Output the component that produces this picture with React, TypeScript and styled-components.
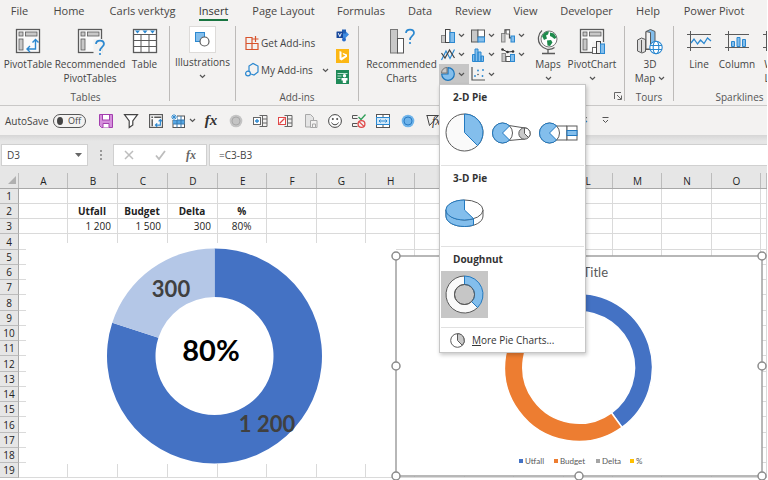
import React from 'react';
import styled, { createGlobalStyle } from 'styled-components';

const UI = '"Open Sans", "Noto Sans", sans-serif';
const CHART = 'Lato, "Open Sans", sans-serif';
const BLUE = '#2b88d0';
const LIGHT = '#83beec';
const INK = '#5a5a5a';
const GREY = '#c8c8c8';

const GlobalStyle = createGlobalStyle`
  *, *::before, *::after { box-sizing: border-box; }
  body { margin: 0; background: #fff; overflow: hidden; }
  button, input { font: inherit; color: inherit; }
  svg { display: block; flex: none; overflow: visible; }
`;

const Page = styled.div`
  display: flex;
  flex-direction: column;
  height: 100vh;
  overflow: hidden;
  border-right: 1px solid #fff;
  background: #e6e6e6;
  color: #444;
  font-family: ${UI};
  font-size: 10px;
  line-height: 14px;
`;

const PlainButton = styled.button`
  border: 0;
  padding: 0;
  margin: 0;
  background: transparent;
  cursor: pointer;
`;

/* ---------- ribbon ---------- */

const TabBar = styled.nav`
  display: flex;
  height: 22px;
  flex: none;
  background: #f3f2f1;
  font-size: 11px;
`;

const Tab = styled(PlainButton)<{ $width: number; $active?: boolean }>`
  flex: none;
  width: ${p => p.$width}px;
  display: flex;
  justify-content: center;
  align-items: flex-start;
  white-space: nowrap;
  color: ${p => (p.$active ? '#333' : '#484644')};
  span {
    padding-top: 3px;
    height: 21px;
    line-height: 15px;
    border-bottom: 2px solid ${p => (p.$active ? '#187541' : 'transparent')};
  }
`;

const Ribbon = styled.div`
  display: flex;
  flex: none;
  height: 84px;
  padding: 4px 0;
  background: #f3f2f1;
  border-bottom: 1px solid #c9c8c7;
`;

const Group = styled.section<{ $width: number; $pad?: number }>`
  flex: none;
  display: flex;
  flex-direction: column;
  width: ${p => p.$width}px;
  height: 75px;
  padding-left: ${p => p.$pad ?? 0}px;
  border-right: 1px solid #bdbbb9;
`;

const GroupBody = styled.div`
  flex: 1;
  display: flex;
  align-items: flex-start;
`;

const GroupLabel = styled.div`
  display: flex;
  justify-content: center;
  height: 12px;
  line-height: 14px;
  margin-bottom: -1px;
  color: #555;
`;

const LauncherRow = styled(GroupLabel)`
  justify-content: flex-end;
  align-items: center;
  padding-right: 2px;
`;

const BigButton = styled(PlainButton)<{ $width: number }>`
  width: ${p => p.$width}px;
  flex: none;
  display: flex;
  flex-direction: column;
  align-items: center;
  padding-top: 3px;
  white-space: nowrap;
  line-height: 14px;
  > svg { margin-bottom: 3px; }
`;

const BoxedButton = styled(BigButton)`
  padding-top: 0;
`;

const IconBox = styled.span`
  display: flex;
  align-items: center;
  justify-content: center;
  width: 27px;
  height: 27px;
  margin-bottom: 2px;
  background: #fff;
  border: 1px solid #dddbd9;
`;

const Caret = styled.span`
  display: flex;
  height: 14px;
  align-items: center;
  justify-content: center;
`;

const InlineLabel = styled.span`
  display: flex;
  align-items: center;
  gap: 3px;
`;

const AddinsBody = styled(GroupBody)`
  padding: 3px 9px 0 9px;
  justify-content: space-between;
`;

const AddinList = styled.div`
  display: flex;
  flex-direction: column;
  gap: 13px;
  padding-top: 7px;
`;

const AddinButton = styled(PlainButton)`
  display: flex;
  align-items: center;
  gap: 2px;
  height: 14px;
  white-space: nowrap;
`;

const AddinCaret = styled(Caret)`
  margin-left: 7px;
`;

const AddinIcons = styled.div`
  display: flex;
  flex-direction: column;
  gap: 7px;
`;

const ChartGrid = styled.div`
  flex: none;
  display: grid;
  grid-template-columns: repeat(3, 30px);
  grid-template-rows: repeat(2, 19px) 20px;
`;

const ChartButton = styled(PlainButton)<{ $open?: boolean }>`
  display: flex;
  align-items: center;
  gap: 3px;
  width: 30px;
  height: 100%;
  padding-left: 2px;
  background: ${p => (p.$open ? '#c6c6c6' : 'transparent')};
`;

const MenuAnchor = styled.div`
  position: relative;
`;

/* ---------- pie menu ---------- */

const Menu = styled.div`
  position: absolute;
  top: 100%;
  left: 0;
  z-index: 10;
  width: 147px;
  padding: 0 1px;
  background: #fff;
  border: 1px solid #c6c6c6;
  box-shadow: 1px 2px 4px rgba(0, 0, 0, 0.22);
  color: #333;
`;

const MenuSection = styled.div`
  height: 81px;
  border-bottom: 1px solid #e1e1e1;
`;

const MenuHeading = styled.div`
  padding: 4px 0 0 12px;
  height: 24px;
  font-size: 10px;
  font-weight: 700;
  line-height: 16px;
`;

const MenuRow = styled.div`
  display: flex;
`;

const MenuTile = styled(PlainButton)<{ $selected?: boolean }>`
  display: flex;
  align-items: center;
  justify-content: center;
  width: 47px;
  height: 47px;
  background: ${p => (p.$selected ? '#c6c6c6' : 'transparent')};
`;

const MoreItem = styled(PlainButton)`
  display: flex;
  align-items: center;
  gap: 7px;
  width: 100%;
  height: 24px;
  padding-left: 9px;
`;

/* ---------- quick access ---------- */

const QuickBar = styled.div`
  display: flex;
  flex: none;
  align-items: center;
  height: 29px;
  padding-left: 5px;
  background: #f3f2f1;
`;

const AutoSave = styled.label`
  display: flex;
  align-items: center;
  width: 88px;
  flex: none;
  justify-content: space-between;
  padding-right: 7px;
`;

const Switch = styled.span`
  display: flex;
  align-items: center;
  gap: 5px;
  width: 33px;
  height: 14px;
  padding: 0 4px 0 3px;
  border: 1px solid #555;
  border-radius: 7px;
  font-size: 9px;
  line-height: 12px;
`;

const SwitchInput = styled.input`
  appearance: none;
  width: 8px;
  height: 8px;
  margin: 0;
  border-radius: 50%;
  background: #444;
`;

const QuickButton = styled(PlainButton)<{ $width?: number }>`
  display: flex;
  flex: none;
  align-items: center;
  justify-content: center;
  gap: 4px;
  width: ${p => p.$width ?? 25}px;
  height: 20px;
`;

const QuickGap = styled.div`
  flex: none;
  width: 123px;
`;

/* ---------- formula bar ---------- */

const FormulaBar = styled.div`
  display: flex;
  flex: none;
  height: 31px;
  padding: 9px 0 0 1px;
  background: linear-gradient(#d6d6d6, #e6e6e6 6px);
`;

const NameBox = styled.div`
  display: flex;
  align-items: center;
  width: 87px;
  padding-right: 5px;
  background: #fff;
  border: 1px solid #d0d0d0;
`;

const FieldInput = styled.input<{ $pad?: number }>`
  flex: 1;
  min-width: 0;
  height: 19px;
  padding: 0 0 0 ${p => p.$pad ?? 5}px;
  border: 0;
  outline: 0;
  background: transparent;
`;

const FormulaDots = styled.div`
  display: flex;
  align-items: center;
  justify-content: center;
  width: 25px;
`;

const FormulaTools = styled.div`
  display: flex;
  align-items: center;
  width: 94px;
  background: #fff;
  border: 1px solid #d0d0d0;
`;

const ToolButton = styled(PlainButton)`
  display: flex;
  flex: 1;
  justify-content: center;
`;

const FormulaField = styled.div`
  display: flex;
  flex: 1;
  margin-left: 2px;
  background: #fff;
  border: 1px solid #d0d0d0;
  border-right: 0;
`;

/* ---------- sheet ---------- */

const Sheet = styled.div`
  position: relative;
  flex: 1;
  min-height: 0;
  overflow: hidden;
  background: #fff;
`;

const Grid = styled.table`
  width: 100%;
  table-layout: fixed;
  border-collapse: separate;
  border-spacing: 0;
  color: #222;
`;

const Col = styled.col<{ $width?: number }>`
  width: ${p => (p.$width ? `${p.$width}px` : 'auto')};
`;

const HeadCell = styled.th`
  height: 23px;
  padding: 8px 0 0;
  background: linear-gradient(#bcbcbc, #bcbcbc) right bottom / 1px 15px no-repeat #e6e6e6;
  border-bottom: 1px solid #a8a8a8;
  font-weight: 400;
  line-height: 14px;
  overflow: hidden;
`;

const Corner = styled(HeadCell)`
  svg { margin-left: 8px; margin-top: -2px; }
`;

const Row = styled.tr`
  height: 15px;
  &:nth-child(4n) { height: 16px; }
`;

const RowHead = styled.th`
  padding: 0;
  background: #e6e6e6;
  border-right: 1px solid #a8a8a8;
  border-bottom: 1px solid #bcbcbc;
  font-size: 10px;
  font-weight: 400;
  line-height: 14px;
`;

const Cell = styled.td<{ $bold?: boolean; $align?: string }>`
  padding: 0 6px 0 5px;
  border-right: 1px solid #dadada;
  border-bottom: 1px solid #dadada;
  font-weight: ${p => (p.$bold ? 700 : 400)};
  text-align: ${p => p.$align ?? 'left'};
  line-height: 14px;
  white-space: nowrap;
  overflow: hidden;
`;

const FloatingChart = styled.figure<{ $x: number; $y: number; $w: number; $h: number }>`
  position: absolute;
  left: ${p => p.$x}px;
  top: ${p => p.$y}px;
  width: ${p => p.$w}px;
  height: ${p => p.$h}px;
  margin: 0;
  background: #fff;
  font-family: ${CHART};
`;

/* ---------- geometry ---------- */

const pt = (cx: number, cy: number, r: number, deg: number) => {
  const a = ((deg - 90) * Math.PI) / 180;
  return `${(cx + r * Math.cos(a)).toFixed(2)} ${(cy + r * Math.sin(a)).toFixed(2)}`;
};

const slice = (cx: number, cy: number, r: number, from: number, to: number) =>
  `M${cx} ${cy}L${pt(cx, cy, r, from)}A${r} ${r} 0 ${to - from > 180 ? 1 : 0} 1 ${pt(cx, cy, r, to)}Z`;

const ring = (cx: number, cy: number, r: number, inner: number, from: number, to: number) => {
  const big = to - from > 180 ? 1 : 0;
  return `M${pt(cx, cy, r, from)}A${r} ${r} 0 ${big} 1 ${pt(cx, cy, r, to)}L${pt(cx, cy, inner, to)}A${inner} ${inner} 0 ${big} 0 ${pt(cx, cy, inner, from)}Z`;
};

/* ---------- icons ---------- */

const Chevron = () => (
  <svg width="7" height="5" viewBox="0 0 7 5" fill="none" stroke="#555" strokeWidth="1.2">
    <path d="M1 1l2.500 2.500L6 1" />
  </svg>
);

const PivotBase = () => (
  <g stroke={INK}>
    <rect x="0.5" y="0.5" width="23" height="23" fill="#fafafa" strokeWidth="1.3" />
    <g fill={GREY} strokeWidth="0.8">
      <rect x="3" y="3" width="4" height="4" />
      <rect x="9.5" y="3" width="11.5" height="4" />
      <rect x="3" y="10" width="4" height="11" />
    </g>
  </g>
);

const PivotIcon = () => (
  <svg width="24" height="25" viewBox="0 0 24 25">
    <PivotBase />
    <path d="M11 20h8.500v-9M14 17l-3 3 3 3M16.500 13.500l3-3 3 3" fill="none" stroke={BLUE} strokeWidth="1.4" />
  </svg>
);

const Question = ({ x, y }: { x: number; y: number }) => (
  <g transform={`translate(${x} ${y})`}>
    <path d="M1 4C1 -0.500 9 -0.500 9 4C9 7 5 7 5 11" fill="none" stroke={BLUE} strokeWidth="1.7" />
    <circle cx="5" cy="14" r="1.1" fill={BLUE} />
  </g>
);

const RecPivotIcon = () => (
  <svg width="24" height="25" viewBox="0 0 24 25">
    <PivotBase />
    <path d="M15.500 10h9v15h-9z" fill="#f3f2f1" />
    <Question x={17} y={11} />
  </svg>
);

const TableIcon = () => (
  <svg width="24" height="25" viewBox="0 0 24 25">
    <rect x="0.5" y="0.5" width="23" height="23" fill="#fff" stroke={INK} strokeWidth="1.3" />
    <path d="M0 5.500h24M0 11.500h24M0 17.500h24M8 5v19M16 5v19" stroke={INK} fill="none" />
    <path d="M2 1.500h5L4.500 4.500zM9.500 1.500h5L12 4.500zM17 1.500h5L19.500 4.500z" fill={BLUE} />
  </svg>
);

const ShapesIcon = () => (
  <svg width="15" height="15" viewBox="0 0 15 15">
    <rect x="0.5" y="0.5" width="9" height="9" fill={LIGHT} stroke={BLUE} />
    <circle cx="9.500" cy="9.500" r="4.500" fill="#fff" stroke={INK} strokeWidth="1.2" />
  </svg>
);

const StoreIcon = () => (
  <svg width="14" height="14" viewBox="0 0 14 14" fill="none" stroke="#d8532c" strokeWidth="1.2">
    <path d="M1 1.500h6v12H1zM1 7.500h12v6H1M10.500 0v6M7.500 3h6" />
  </svg>
);

const HexIcon = () => (
  <svg width="14" height="14" viewBox="0 0 14 14" fill="none" stroke={BLUE} strokeWidth="1.2">
    <path d="M4 8V3l4-2.500L13 3v6l-4 3-3-1" />
    <circle cx="3" cy="10.500" r="2.400" />
  </svg>
);

const VisioIcon = () => (
  <svg width="13" height="13" viewBox="0 0 13 13">
    <path d="M8.500 1l4.500 4.500-4.500 4.500L4 6z" fill="#3f8be0" />
    <path d="M6 0.500h4v4H6z" fill="#2360b5" />
    <circle cx="8" cy="10.500" r="2" fill="#2a6cc8" />
    <rect x="0.5" y="2.500" width="6.500" height="6.500" rx="0.5" fill="#17479b" />
    <path d="M2.300 4.200l1.500 3.400 1.500-3.400" stroke="#fff" fill="none" />
  </svg>
);

const BingIcon = () => (
  <svg width="13" height="14" viewBox="0 0 13 14">
    <rect width="13" height="14" fill="#fcb714" />
    <path d="M3.500 2l2 .8v6l4-2.300-2.300-1-.7-1.800 4.500 1.800v2.300l-5.500 3.700-2-1.200z" fill="#fff" />
  </svg>
);

const PeopleIcon = () => (
  <svg width="13" height="14" viewBox="0 0 13 14">
    <rect width="13" height="14" fill="#1f8a58" />
    <path d="M1.500 3.500h10M1.500 6h4M1.500 8.500h3" stroke="#b9e3cf" />
    <circle cx="8.500" cy="5.800" r="1.700" fill="#fff" />
    <path d="M5.500 8h6v2.500h-1.300V13H6.800v-2.500H5.500z" fill="#fff" />
  </svg>
);

const RecChartsIcon = () => (
  <svg width="24" height="25" viewBox="0 0 24 25">
    <rect x="0.5" y="0.5" width="7" height="23.500" fill={GREY} stroke="#777" />
    <rect x="7.500" y="9.500" width="6" height="14.500" fill="#fff" stroke="#555" />
    <Question x={15} y={0} />
  </svg>
);

const ColumnMini = () => (
  <svg width="14" height="14" viewBox="0 0 14 14">
    <rect x="0.5" y="6.500" width="4" height="7" fill={GREY} stroke="#888" />
    <rect x="4.500" y="0.500" width="4.500" height="13" fill="#fff" stroke="#444" />
    <rect x="9" y="3.500" width="4.500" height="10" fill={LIGHT} stroke={BLUE} />
  </svg>
);

const TreeMini = () => (
  <svg width="14" height="14" viewBox="0 0 14 14">
    <rect x="0.5" y="1" width="6.500" height="12" fill={GREY} stroke={INK} />
    <rect x="7" y="1" width="6.500" height="7" fill="#fff" stroke={INK} />
    <rect x="7" y="8" width="6.500" height="5" fill={LIGHT} stroke={BLUE} />
  </svg>
);

const WaterfallMini = () => (
  <svg width="14" height="14" viewBox="0 0 14 14">
    <rect x="0.5" y="4.500" width="3.500" height="8.500" fill={GREY} stroke="#888" />
    <path d="M4 4.500V0.800h4.500v8h2" fill="none" stroke="#444" strokeWidth="1.2" />
    <rect x="5.200" y="1" width="3.300" height="4" fill="#fff" stroke="#666" strokeWidth="0.8" />
    <rect x="10" y="7" width="3.500" height="6" fill={LIGHT} stroke={BLUE} />
  </svg>
);

const LineMini = () => (
  <svg width="14" height="14" viewBox="0 0 14 14" fill="none" strokeWidth="1.2">
    <path d="M0.500 12L5 3l4 7.500 4.500-9" stroke={BLUE} />
    <path d="M0.500 5L4 10l4.500-8 5 8" stroke="#444" />
  </svg>
);

const HistogramMini = () => (
  <svg width="14" height="14" viewBox="0 0 14 14" fill={LIGHT} stroke={BLUE}>
    <path d="M1.500 13.500V6.500h2.500v7zM4 13.500V1h3v12.500zM7 13.500V4h3v9.500zM10 13.500V8h2.500v5.500z" />
  </svg>
);

const ComboMini = () => (
  <svg width="14" height="14" viewBox="0 0 14 14">
    <rect x="1" y="5.500" width="3.500" height="8" fill={GREY} stroke="#888" />
    <rect x="5" y="8.500" width="4.500" height="5" fill="#fff" stroke="#555" />
    <rect x="9.500" y="6.500" width="4" height="7" fill={LIGHT} stroke={BLUE} />
    <path d="M1.500 1.500L6.500 4l5.500-.5" fill="none" stroke="#333" />
    <circle cx="1.500" cy="1.500" r="1.300" fill="#333" />
    <circle cx="6.500" cy="4" r="1.300" fill="#333" />
    <circle cx="12" cy="3.500" r="1.300" fill="#333" />
  </svg>
);

const PieMini = () => (
  <svg width="14" height="14" viewBox="0 0 14 14">
    <path d={slice(7, 7, 6.3, 0, 270)} fill={LIGHT} stroke="#1b75bb" strokeWidth="1.2" />
    <path d={slice(6, 6, 5.5, 270, 360)} fill={GREY} stroke="#777" />
  </svg>
);

const ScatterMini = () => (
  <svg width="14" height="14" viewBox="0 0 14 14">
    <path d="M1 0v13h13" fill="none" stroke="#555" strokeWidth="1.2" />
    <g fill={BLUE}>
      <circle cx="4" cy="9" r="0.900" />
      <circle cx="7" cy="3.500" r="0.900" />
      <circle cx="12" cy="3" r="0.900" />
      <circle cx="11.500" cy="9" r="0.900" />
    </g>
    <circle cx="7" cy="7.500" r="0.8" fill="#555" />
  </svg>
);

const GlobeIcon = () => (
  <svg width="22" height="25" viewBox="0 0 22 25">
    <circle cx="12" cy="10" r="8" fill="#fff" stroke="#777" />
    <path d="M5 7c2-4 5-5 7-4.500l-1 3-2 1 1 3-3 1.500zM13 3.500l4 1 2.500 4-2 1.500-2.500-2-2-1zM10 11.500l4-.5 1.500 2.500-2.500 3.500-2.500-.5z" fill="#1e8a4c" />
    <path d="M5 1.500C1 5 0 11.500 3.500 16s9.500 6 14 2.500" fill="none" stroke={INK} strokeWidth="1.2" />
    <path d="M11 20v4M5 24.500h13" stroke={INK} strokeWidth="1.3" />
  </svg>
);

const PivotChartIcon = () => (
  <svg width="25" height="25" viewBox="0 0 25 25">
    <PivotBase />
    <path d="M12.500 13h12v12h-12z" fill="#f3f2f1" />
    <rect x="12.500" y="18.500" width="4" height="6" fill="#fff" stroke="#666" />
    <rect x="16.500" y="12.500" width="4" height="12" fill="#eee" stroke="#444" />
    <rect x="20.500" y="15" width="4" height="9.500" fill={LIGHT} stroke={BLUE} />
  </svg>
);

const MapIcon = () => (
  <svg width="26" height="25" viewBox="0 0 26 25">
    <path d="M0.500 11l4-2 4 1.500v12L5 24l-4.500-2z" fill="#ddd" stroke={INK} />
    <path d="M4.500 11v12" stroke={INK} />
    <path d="M9 2.500l4.500-2 4.500 2v18H9z" fill={LIGHT} stroke={INK} />
    <path d="M9 2.500l4.500 1V20H9z" fill="#f2f2f2" stroke={INK} />
    <g fill="none" stroke={BLUE} strokeWidth="1.1">
      <circle cx="19" cy="18.500" r="6.200" fill="#fff" />
      <ellipse cx="19" cy="18.500" rx="2.800" ry="6.200" />
      <path d="M13 16.500h12M13 20.500h12" />
    </g>
  </svg>
);

const SparkLine = () => (
  <svg width="24" height="25" viewBox="0 0 24 25" fill="none">
    <path d="M0 5.500h24M0 18.500h24M3.500 2v20" stroke={INK} />
    <path d="M4 14l3-4 3.500 5 3-4 3.500 3.500L20.500 9l3.500 3" stroke={BLUE} strokeWidth="1.300" />
  </svg>
);

const SparkColumn = () => (
  <svg width="24" height="25" viewBox="0 0 24 25">
    <path d="M0 5.500h24M0 18.500h24M3.500 2v20" stroke={INK} />
    <path d="M6.500 12.500h3v5h-3zM12 8.500h3v9h-3zM17.500 10.500h3v7h-3z" fill={LIGHT} stroke={BLUE} />
  </svg>
);

const SparkWin = () => (
  <svg width="24" height="25" viewBox="0 0 24 25">
    <path d="M0 5.500h24M0 18.500h24M3.500 2v20" stroke={INK} />
    <path d="M6.500 8.500h3v4h-3zM17.500 8.500h3v4h-3z" fill={LIGHT} stroke={BLUE} />
  </svg>
);

const Launcher = () => (
  <svg width="8" height="8" viewBox="0 0 8 8" fill="none" stroke="#666">
    <path d="M0.500 7V0.500H7M3 3l4 4M7.500 3.500v4h-4" />
  </svg>
);

const PieTile = () => (
  <svg width="39" height="39" viewBox="0 0 39 39">
    <circle cx="19.500" cy="19.500" r="18.500" fill="#fafafa" stroke={INK} />
    <path d={slice(19.5, 19.5, 18.5, 0, 135)} fill={LIGHT} stroke="#2279c0" />
  </svg>
);

const SmallCut = () => (
  <>
    <circle cx="10.500" cy="11" r="10" fill="#fff" stroke={INK} />
    <path d={slice(10.5, 11, 10, 135, 405)} fill={LIGHT} stroke="#2279c0" />
  </>
);

const PieOfPieTile = () => (
  <svg width="39" height="22" viewBox="0 0 39 22">
    <path d="M17 3.500L33 6M17 18.500L33 17" stroke={INK} fill="none" />
    <SmallCut />
    <circle cx="32.500" cy="11.500" r="5.700" fill={GREY} stroke={INK} />
    <path d={slice(32.5, 11.5, 5.7, 0, 135)} fill="#fff" stroke={INK} />
  </svg>
);

const BarOfPieTile = () => (
  <svg width="39" height="22" viewBox="0 0 39 22">
    <path d="M17 4H28V18H17" stroke={INK} fill="#fff" />
    <SmallCut />
    <rect x="28" y="4" width="10" height="14" fill="#fff" stroke={INK} />
    <rect x="28" y="8.500" width="10" height="5" fill={LIGHT} stroke="#2279c0" />
  </svg>
);

const Pie3DTile = () => (
  <svg width="39" height="29" viewBox="0 0 39 29">
    <path d="M1 11v6c0 6 8 10.500 18.500 10.500S38 23 38 17v-6z" fill="#fff" stroke={INK} />
    <path d="M1 11v6c0 6 8 10.500 18.500 10.500 3 0 6-.5 9-1.500v-6z" fill={LIGHT} stroke="#2279c0" />
    <ellipse cx="19.500" cy="11" rx="18.500" ry="10" fill="#fff" stroke={INK} />
    <path d="M19.500 11V1C9 1 1 5.500 1 11s8 10 18.500 10c3.500 0 6.500-.5 9-1.400z" fill={LIGHT} stroke="#2279c0" />
  </svg>
);

const DoughnutTile = () => (
  <svg width="39" height="39" viewBox="0 0 39 39">
    <path d={ring(19.5, 19.5, 18.5, 10, 135, 360)} fill="#fafafa" stroke={INK} />
    <path d={ring(19.5, 19.5, 18.5, 10, 0, 135)} fill={LIGHT} stroke="#2279c0" />
    <circle cx="19.500" cy="19.500" r="10" fill="none" stroke={INK} />
  </svg>
);

const MorePie = () => (
  <svg width="15" height="15" viewBox="0 0 15 15">
    <circle cx="7.500" cy="7.500" r="6.800" fill="#fff" stroke={INK} />
    <path d={slice(7.5, 7.5, 6.8, 0, 135)} fill={GREY} stroke={INK} />
  </svg>
);

const SaveIcon = () => (
  <svg width="14" height="14" viewBox="0 0 14 14">
    <path d="M0.500 0.500h13v13h-11l-2-2z" fill="#d58fdc" stroke="#a33fae" />
    <rect x="3.500" y="0.500" width="7" height="5.500" fill="#fff" stroke="#a33fae" />
    <path d="M4 13.500V9.500h6v4" fill="#fff" stroke="#a33fae" />
  </svg>
);

const FunnelIcon = () => (
  <svg width="14" height="14" viewBox="0 0 14 14">
    <path d="M0.500 0.700h13L8.800 7v4L5.200 13.500V7z" fill="#fff" stroke="#444" strokeWidth="1.200" />
  </svg>
);

const PivotSmall = () => (
  <svg width="14" height="14" viewBox="0 0 24 24">
    <g stroke={INK} strokeWidth="2">
      <rect x="1" y="1" width="22" height="22" fill="#fafafa" />
      <path d="M4 5.500h3M9 5.500h12M5.500 9v12" strokeWidth="2.500" />
    </g>
    <path d="M11 19h8.500v-9M14 16l-3 3 3 3M16.500 12.500l3-3 3 3" fill="none" stroke={BLUE} strokeWidth="2" />
  </svg>
);

const TableStar = () => (
  <svg width="14" height="14" viewBox="0 0 14 14">
    <rect x="2" y="2" width="11.500" height="11.500" fill="#fff" stroke="#555" />
    <path d="M2 6h11.500v4H2z" fill="#56a7e4" />
    <path d="M2 6h11.500M2 10h11.500M6 2v11.500M10 2v11.500" stroke="#3878ad" fill="none" />
    <path d="M0 0h6v6H0z" fill="#f3f2f1" />
    <path d="M3 0v6M0 3h6M1 1l4 4M5 1L1 5" stroke={BLUE} strokeWidth="0.9" />
  </svg>
);

const FxIcon = ({ size = 14, color = '#333' }: { size?: number; color?: string }) => (
  <svg width="14" height="14" viewBox="0 0 14 14">
    <text x="7" y="11" textAnchor="middle" fontFamily='"Liberation Serif", serif' fontStyle="italic" fontWeight="700" fontSize={size} fill={color}>
      fx
    </text>
  </svg>
);

const DotIcon = ({ fill, stroke }: { fill: string; stroke: string }) => (
  <svg width="14" height="14" viewBox="0 0 14 14">
    <circle cx="7" cy="7" r="6.300" fill={fill} />
    <circle cx="7" cy="7" r="4" fill="none" stroke={stroke} />
  </svg>
);

const InsertCells = ({ color, cross }: { color: string; cross?: boolean }) => (
  <svg width="15" height="14" viewBox="0 0 15 14" fill="none">
    <path d="M6.500 1.500H14v11H6.500M9.500 1.500v11M9.500 5H14M9.500 9H14" stroke="#666" />
    <rect x="0.500" y="3.500" width="7" height="7" fill="#fff" stroke={color} />
    <path d={cross ? 'M1.500 9.500l5-5' : 'M2 7h4M4 5v4'} stroke={cross ? color : BLUE} strokeWidth="1.300" />
  </svg>
);

const PagesIcon = () => (
  <svg width="14" height="14" viewBox="0 0 14 14" fill="#e4e4e4" stroke="#a8a8a8">
    <path d="M1.500 0.500h5l3 3v9.500h-8z" />
    <path d="M6.500 6.500h6.500v7H6.500zM8.500 10h3v3.500h-3z" fill="#f3f2f1" />
  </svg>
);

const SmileIcon = () => (
  <svg width="14" height="14" viewBox="0 0 14 14" fill="none" stroke="#444">
    <circle cx="7" cy="7" r="6.400" fill="#fff" />
    <path d="M3.500 8.500c1.500 3 5.500 3 7 0" />
    <circle cx="4.800" cy="5" r="0.600" fill="#444" />
    <circle cx="9.200" cy="5" r="0.600" fill="#444" />
  </svg>
);

const RulesIcon = () => (
  <svg width="14" height="14" viewBox="0 0 14 14" fill="none">
    <path d="M5.500 1.500h-5v3h5M5.500 9.500h-5v3h5" stroke="#555" />
    <path d="M6.500 3l2.500 2.500L13.500 0.500" stroke="#2f9e58" strokeWidth="1.300" />
    <circle cx="9.500" cy="10" r="3.400" stroke="#e04848" strokeWidth="1.300" />
    <path d="M7 7.600l5 4.800" stroke="#e04848" strokeWidth="1.300" />
  </svg>
);

const MergeIcon = () => (
  <svg width="14" height="14" viewBox="0 0 14 14" fill="none">
    <rect x="0.500" y="0.500" width="13" height="13" fill="#fff" stroke="#555" />
    <path d="M7 0.500v3M7 10.500v3" stroke="#555" />
    <rect x="0.500" y="3.500" width="13" height="7" fill="#d3e9f9" stroke={BLUE} />
    <path d="M3 7h8M4.500 5.500L3 7l1.500 1.500M9.500 5.500L11 7 9.500 8.500" stroke={BLUE} />
  </svg>
);

const CheckFx = () => (
  <svg width="14" height="14" viewBox="0 0 14 14" fill="none">
    <path d="M0.500 1.500h12M1 1.500l2.500 10L12.500 1.500" stroke="#444" />
    <text x="6" y="11" fontFamily='"Liberation Serif", serif' fontStyle="italic" fontSize="12" fill="#333">
      fx
    </text>
  </svg>
);

const RedoIcon = () => (
  <svg width="14" height="14" viewBox="0 0 14 14" fill="none">
    <path d="M2 2h8l3 2" stroke="#666" />
    <path d="M6 13l7-6M3 13h7" stroke={BLUE} strokeWidth="1.300" />
  </svg>
);

const Customize = () => (
  <svg width="7" height="7" viewBox="0 0 7 7" fill="none" stroke="#555">
    <path d="M0.500 0.500h6M1 3l2.500 2.500L6 3" />
  </svg>
);

/* ---------- data ---------- */

const tabs: [string, number][] = [
  ['File', 39],
  ['Home', 60],
  ['Carls verktyg', 87],
  ['Insert', 55],
  ['Page Layout', 85],
  ['Formulas', 70],
  ['Data', 48],
  ['Review', 58],
  ['View', 47],
  ['Developer', 75],
  ['Help', 48],
  ['Power Pivot', 84],
];

const letters = 'ABCDEFGHIJKLMNOP'.split('');

const cells: Record<string, { text: string; bold?: boolean; align: string }> = {
  B2: { text: 'Utfall', bold: true, align: 'center' },
  C2: { text: 'Budget', bold: true, align: 'center' },
  D2: { text: 'Delta', bold: true, align: 'center' },
  E2: { text: '%', bold: true, align: 'center' },
  B3: { text: '1 200', align: 'right' },
  C3: { text: '1 500', align: 'right' },
  D3: { text: '300', align: 'right' },
  E3: { text: '80%', align: 'center' },
};

const miniCharts = [
  { name: 'Column or bar chart', Icon: ColumnMini },
  { name: 'Hierarchy chart', Icon: TreeMini },
  { name: 'Waterfall chart', Icon: WaterfallMini },
  { name: 'Line or area chart', Icon: LineMini },
  { name: 'Statistic chart', Icon: HistogramMini },
  { name: 'Combo chart', Icon: ComboMini },
];

const legend = [
  { name: 'Utfall', color: '#4472c4', x: 123 },
  { name: 'Budget', color: '#ed7d31', x: 158 },
  { name: 'Delta', color: '#a5a5a5', x: 200 },
  { name: '%', color: '#ffc000', x: 234 },
];

const handles = [
  [0, 0], [366, 0], [0, 110], [366, 110], [0, 220], [183, 220], [366, 220], [183, 0],
];

/* ---------- parts ---------- */

const PieMenu = () => (
  <Menu role="menu">
    <MenuSection>
      <MenuHeading>2-D Pie</MenuHeading>
      <MenuRow>
        <MenuTile aria-label="Pie"><PieTile /></MenuTile>
        <MenuTile aria-label="Pie of pie"><PieOfPieTile /></MenuTile>
        <MenuTile aria-label="Bar of pie"><BarOfPieTile /></MenuTile>
      </MenuRow>
    </MenuSection>
    <MenuSection>
      <MenuHeading>3-D Pie</MenuHeading>
      <MenuRow>
        <MenuTile aria-label="3-D pie"><Pie3DTile /></MenuTile>
      </MenuRow>
    </MenuSection>
    <MenuSection>
      <MenuHeading>Doughnut</MenuHeading>
      <MenuRow>
        <MenuTile aria-label="Doughnut" $selected><DoughnutTile /></MenuTile>
      </MenuRow>
    </MenuSection>
    <MoreItem>
      <MorePie />
      <span><u>M</u>ore Pie Charts...</span>
    </MoreItem>
  </Menu>
);

const ShareChart = () => (
  <FloatingChart $x={26} $y={77} $w={370} $h={221}>
    <svg width="370" height="221" viewBox="26 243 370 221">
      <path d={ring(214.5, 356, 107.5, 59, 0, 288)} fill="#4472c4" />
      <path d={ring(214.5, 356, 107.5, 59, 288, 360)} fill="#b4c7e7" />
      <g textAnchor="middle" fontWeight="700" fill="#404040">
        <text x="171" y="297" fontSize="22">300</text>
        <text x="267" y="432" fontSize="22">1 200</text>
        <text x="211" y="361" fontSize="29" fill="#000">80%</text>
      </g>
    </svg>
  </FloatingChart>
);

const BudgetChart = () => (
  <FloatingChart $x={396} $y={90} $w={366} $h={220}>
    <svg width="366" height="220" viewBox="0 0 366 220">
      <rect width="366" height="220" fill="#fff" stroke="#a0a0a0" strokeWidth="1.500" />
      <text x="182" y="21" textAnchor="middle" fontSize="13" fill="#595959">Chart Title</text>
      <g stroke="#fff" strokeWidth="1.500">
        <path d={ring(182.5, 111.5, 74, 56, 0, 144)} fill="#4472c4" />
        <path d={ring(182.5, 111.5, 74, 56, 144, 324)} fill="#ed7d31" />
        <path d={ring(182.5, 111.5, 74, 56, 324, 360)} fill="#a5a5a5" />
      </g>
      {legend.map(item => (
        <g key={item.name}>
          <rect x={item.x} y="203" width="4" height="4" fill={item.color} />
          <text x={item.x + 6} y="208" fontSize="8" fill="#595959">{item.name}</text>
        </g>
      ))}
      {handles.map(([x, y]) => (
        <circle key={`${x}-${y}`} cx={x} cy={y} r="4" fill="#fff" stroke="#8c8c8c" strokeWidth="1.500" />
      ))}
    </svg>
  </FloatingChart>
);

export default function App() {
  return (
    <Page>
      <GlobalStyle />
      <TabBar>
        {tabs.map(([name, width]) => (
          <Tab key={name} $width={width} $active={name === 'Insert'}>
            <span>{name}</span>
          </Tab>
        ))}
      </TabBar>

      <Ribbon>
        <Group $width={170} $pad={2}>
          <GroupBody>
            <BigButton $width={52}><PivotIcon />PivotTable</BigButton>
            <BigButton $width={72}><RecPivotIcon /><span>Recommended</span><span>PivotTables</span></BigButton>
            <BigButton $width={37}><TableIcon />Table</BigButton>
          </GroupBody>
          <GroupLabel>Tables</GroupLabel>
        </Group>
        <Group $width={66}>
          <GroupBody>
            <BoxedButton $width={65}>
              <IconBox><ShapesIcon /></IconBox>
              Illustrations
              <Caret><Chevron /></Caret>
            </BoxedButton>
          </GroupBody>
        </Group>
        <Group $width={123}>
          <AddinsBody>
            <AddinList>
              <AddinButton><StoreIcon />Get Add-ins</AddinButton>
              <AddinButton>
                <HexIcon />My Add-ins
                <AddinCaret><Chevron /></AddinCaret>
              </AddinButton>
            </AddinList>
            <AddinIcons>
              <PlainButton aria-label="Visio"><VisioIcon /></PlainButton>
              <PlainButton aria-label="Bing Maps"><BingIcon /></PlainButton>
              <PlainButton aria-label="People Graph"><PeopleIcon /></PlainButton>
            </AddinIcons>
          </AddinsBody>
          <GroupLabel>Add-ins</GroupLabel>
        </Group>
        <Group $width={266} $pad={5}>
          <GroupBody>
            <BigButton $width={75}><RecChartsIcon /><span>Recommended</span><span>Charts</span></BigButton>
            <ChartGrid>
              {miniCharts.map(({ name, Icon }) => (
                <ChartButton key={name} aria-label={name}><Icon /><Chevron /></ChartButton>
              ))}
              <MenuAnchor>
                <ChartButton aria-label="Pie or doughnut chart" aria-expanded="true" $open><PieMini /><Chevron /></ChartButton>
                <PieMenu />
              </MenuAnchor>
              <ChartButton aria-label="Scatter chart"><ScatterMini /><Chevron /></ChartButton>
            </ChartGrid>
            <BigButton $width={38}><GlobeIcon />Maps<Caret><Chevron /></Caret></BigButton>
            <BigButton $width={50}><PivotChartIcon />PivotChart<Caret><Chevron /></Caret></BigButton>
          </GroupBody>
          <LauncherRow><PlainButton aria-label="Chart options"><Launcher /></PlainButton></LauncherRow>
        </Group>
        <Group $width={49}>
          <GroupBody>
            <BigButton $width={50}>
              <MapIcon />
              <span>3D</span>
              <InlineLabel>Map<Chevron /></InlineLabel>
            </BigButton>
          </GroupBody>
          <GroupLabel>Tours</GroupLabel>
        </Group>
        <Group $width={125} $pad={7}>
          <GroupBody>
            <BigButton $width={36}><SparkLine />Line</BigButton>
            <BigButton $width={40}><SparkColumn />Column</BigButton>
            <BigButton $width={36}><SparkWin /><span>Win/</span><span>Loss</span></BigButton>
          </GroupBody>
          <GroupLabel>Sparklines</GroupLabel>
        </Group>
      </Ribbon>

      <QuickBar>
        <AutoSave>
          AutoSave
          <Switch><SwitchInput type="checkbox" />Off</Switch>
        </AutoSave>
        <QuickButton aria-label="Save"><SaveIcon /></QuickButton>
        <QuickButton aria-label="Filter"><FunnelIcon /></QuickButton>
        <QuickButton aria-label="PivotTable"><PivotSmall /></QuickButton>
        <QuickButton aria-label="Format as table" $width={30}><TableStar /><Chevron /></QuickButton>
        <QuickButton aria-label="Insert function"><FxIcon size={15} /></QuickButton>
        <QuickButton aria-label="Record"><DotIcon fill="#c4c4c4" stroke="#a8a8a8" /></QuickButton>
        <QuickButton aria-label="Insert cells"><InsertCells color="#666" /></QuickButton>
        <QuickButton aria-label="Delete cells"><InsertCells color="#e04848" cross /></QuickButton>
        <QuickButton aria-label="Paste"><PagesIcon /></QuickButton>
        <QuickButton aria-label="Feedback" $width={24}><SmileIcon /></QuickButton>
        <QuickButton aria-label="Rules" $width={24}><RulesIcon /></QuickButton>
        <QuickButton aria-label="Merge" $width={24}><MergeIcon /></QuickButton>
        <QuickButton aria-label="Shape"><DotIcon fill="#6fb4ea" stroke="#2b7cc4" /></QuickButton>
        <QuickButton aria-label="Check formula"><CheckFx /></QuickButton>
        <QuickGap />
        <QuickButton aria-label="Redo"><RedoIcon /></QuickButton>
        <QuickButton aria-label="Customize toolbar"><Customize /></QuickButton>
      </QuickBar>

      <FormulaBar>
        <NameBox>
          <FieldInput aria-label="Name box" defaultValue="D3" />
          <svg width="7" height="4" viewBox="0 0 7 4"><path d="M0 0h7L3.500 4z" fill="#666" /></svg>
        </NameBox>
        <FormulaDots>
          <svg width="2" height="10" viewBox="0 0 2 10" fill="#999">
            <rect width="2" height="2" /><rect y="4" width="2" height="2" /><rect y="8" width="2" height="2" />
          </svg>
        </FormulaDots>
        <FormulaTools>
          <ToolButton aria-label="Cancel">
            <svg width="10" height="10" viewBox="0 0 10 10"><path d="M1 1l8 8M9 1L1 9" stroke="#bdbdbd" strokeWidth="1.500" /></svg>
          </ToolButton>
          <ToolButton aria-label="Enter">
            <svg width="11" height="10" viewBox="0 0 11 10"><path d="M1 5.500L4 9l6-8" fill="none" stroke="#bdbdbd" strokeWidth="1.800" /></svg>
          </ToolButton>
          <ToolButton aria-label="Insert function"><FxIcon size={12} color="#666" /></ToolButton>
        </FormulaTools>
        <FormulaField>
          <FieldInput aria-label="Formula" defaultValue="=C3-B3" $pad={9} />
        </FormulaField>
      </FormulaBar>

      <Sheet>
        <Grid>
          <colgroup>
            <Col $width={19} />
            {letters.map((l, i) => (
              <Col key={l} $width={i === 0 ? 49 : i < 4 ? 50 : i === 15 ? 6 : undefined} />
            ))}
          </colgroup>
          <thead>
            <tr>
              <Corner aria-label="Select all">
                <svg width="8" height="8" viewBox="0 0 8 8"><path d="M8 0v8H0z" fill="#b0b0b0" /></svg>
              </Corner>
              {letters.map(l => (
                <HeadCell key={l} scope="col">{l === 'P' ? '' : l}</HeadCell>
              ))}
            </tr>
          </thead>
          <tbody>
            {Array.from({ length: 19 }, (_, i) => i + 1).map(row => (
              <Row key={row}>
                <RowHead scope="row">{row}</RowHead>
                {letters.map(l => {
                  const cell = cells[`${l}${row}`];
                  return (
                    <Cell key={l} $bold={cell?.bold} $align={cell?.align}>{cell?.text}</Cell>
                  );
                })}
              </Row>
            ))}
          </tbody>
        </Grid>
        <ShareChart />
        <BudgetChart />
      </Sheet>
    </Page>
  );
}
